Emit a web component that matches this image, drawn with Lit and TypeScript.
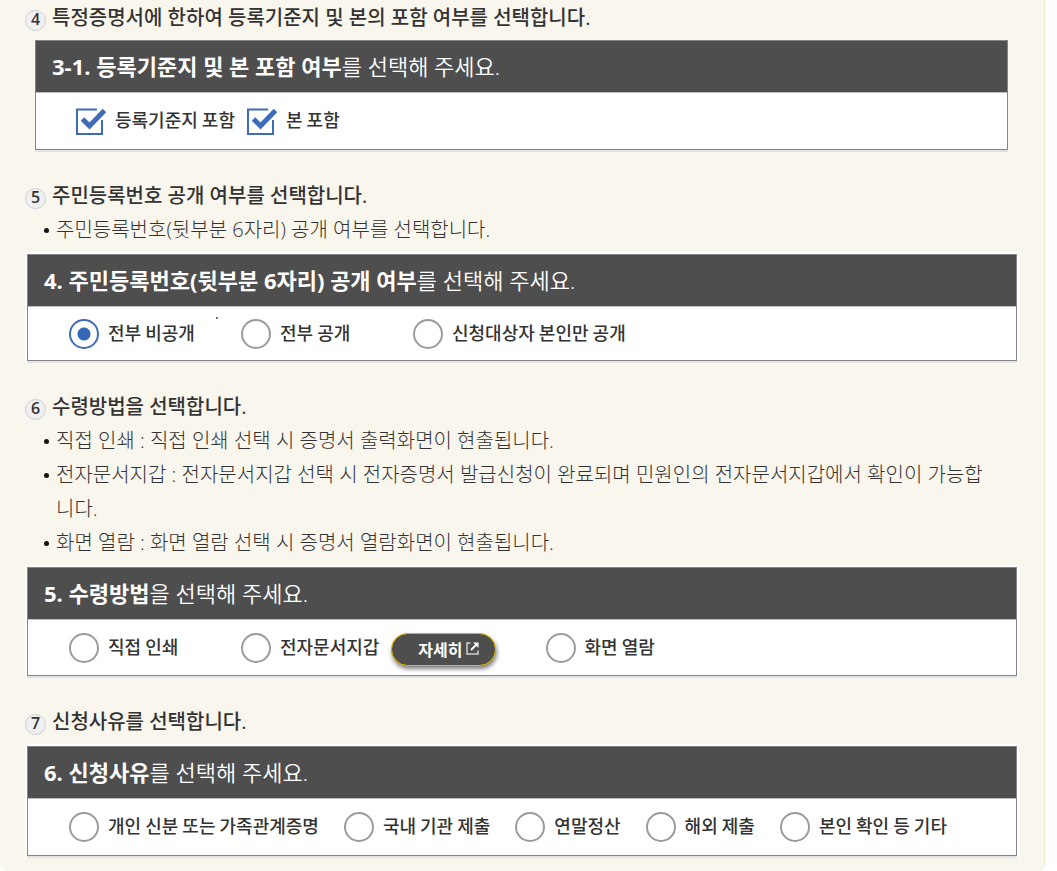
import { LitElement, html, css, svg, nothing } from "lit";
import { customElement, property } from "lit/decorators.js";

interface Choice {
  label: string;
  checked?: boolean;
  more?: boolean;
}

interface Step {
  no: number;
  title: string;
  notes: string[];
  panelStrong: string;
  panelRest: string;
  kind: "checkbox" | "radio";
  variant: string;
  speck?: boolean;
  choices: Choice[];
}

const STEPS: Step[] = [
  {
    no: 4,
    title: "특정증명서에 한하여 등록기준지 및 본의 포함 여부를 선택합니다.",
    notes: [],
    panelStrong: "3-1. 등록기준지 및 본 포함 여부",
    panelRest: "를 선택해 주세요.",
    kind: "checkbox",
    variant: "inset",
    choices: [
      { label: "등록기준지 포함", checked: true },
      { label: "본 포함", checked: true },
    ],
  },
  {
    no: 5,
    title: "주민등록번호 공개 여부를 선택합니다.",
    notes: ["주민등록번호(뒷부분 6자리) 공개 여부를 선택합니다."],
    panelStrong: "4. 주민등록번호(뒷부분 6자리) 공개 여부",
    panelRest: "를 선택해 주세요.",
    kind: "radio",
    variant: "short",
    speck: true,
    choices: [
      { label: "전부 비공개", checked: true },
      { label: "전부 공개" },
      { label: "신청대상자 본인만 공개" },
    ],
  },
  {
    no: 6,
    title: "수령방법을 선택합니다.",
    notes: [
      "직접 인쇄 : 직접 인쇄 선택 시 증명서 출력화면이 현출됩니다.",
      "전자문서지갑 : 전자문서지갑 선택 시 전자증명서 발급신청이 완료되며 민원인의 전자문서지갑에서 확인이 가능합니다.",
      "화면 열람 : 화면 열람 선택 시 증명서 열람화면이 현출됩니다.",
    ],
    panelStrong: "5. 수령방법",
    panelRest: "을 선택해 주세요.",
    kind: "radio",
    variant: "medium",
    choices: [
      { label: "직접 인쇄" },
      { label: "전자문서지갑", more: true },
      { label: "화면 열람" },
    ],
  },
  {
    no: 7,
    title: "신청사유를 선택합니다.",
    notes: [],
    panelStrong: "6. 신청사유",
    panelRest: "를 선택해 주세요.",
    kind: "radio",
    variant: "tall",
    choices: [
      { label: "개인 신분 또는 가족관계증명" },
      { label: "국내 기관 제출" },
      { label: "연말정산" },
      { label: "해외 제출" },
      { label: "본인 확인 등 기타" },
    ],
  },
];

const tick = svg`
  <path d="M21 1.5 H1 V26 H26 V12" fill="none" stroke="#3f6cb8" stroke-width="2"/>
  <path d="M6.5 11 L13.5 18 L28.5 2.5" fill="none" stroke="#3f6cb8" stroke-width="5"/>`;

@customElement("choice-panel")
class ChoicePanel extends LitElement {
  @property({ attribute: false }) step!: Step;

  static styles = css`
    :host { display: block; }
    * { box-sizing: border-box; }
    .frame { padding: 2px; background: #fff; }
    .frame.inset { margin: 0 10px; padding: 0 1px 2px 0; background: none; }
    .panel {
      border: 1px solid #858585; background: #fff;
      box-shadow: 0 2px 0 #e2e2e4;
    }
    .head {
      padding: 0 16px; background: #4e4e4e; color: #fff;
      font-size: 22px; line-height: 51px; font-weight: 350;
    }
    .head b { font-weight: 700; }
    .body {
      position: relative; display: flex; flex-wrap: wrap; align-items: center;
      column-gap: 25px; padding: 0 41px; min-height: 57px;
      border-top: 1px solid #bdbdbd;
      font-family: "Noto Sans CJK KR", sans-serif;
    }
    .short .body { min-height: 54px; }
    .medium .body { min-height: 56px; }
    .inset .body { padding: 0 40px; column-gap: 12px; }
    .choice { display: flex; align-items: center; }
    .short .choice, .medium .choice { min-width: 147px; }
    label {
      display: flex; align-items: center; gap: 9px;
      color: #333; font-size: 18px; line-height: 28px; font-weight: 500;
    }
    .text { padding-bottom: 4px; }
    input { appearance: none; margin: 0; display: block; }
    input[type="radio"] {
      width: 30px; height: 30px; border: 2px solid #9b9b9b; border-radius: 50%;
      background: #fff;
    }
    input[type="radio"]:checked {
      border-color: #3f6cb8;
      background: radial-gradient(circle, #3568b5 6px, #fff 7px);
    }
    .tickbox { display: grid; width: 30px; height: 27px; }
    .tickbox > * { grid-area: 1 / 1; width: 30px; height: 27px; }
    .tickbox svg { pointer-events: none; }
    .more {
      display: flex; align-items: center; gap: 3px;
      height: 33px; margin: 4px 25px 0 12px; padding: 0 16px 2px 26px;
      border: 1px solid #e0b400; border-radius: 17px; background: #4e4e4e;
      box-shadow: 1px 3px 4px rgba(0, 0, 0, 0.5);
      color: #fff; font: inherit; font-size: 16px; line-height: 28px; font-weight: 700;
    }
    .more svg { width: 13px; height: 13px; }
    .speck {
      position: absolute; left: 188px; top: 10px; width: 2px; height: 2px;
      background: #777;
    }
  `;

  render() {
    const s = this.step;
    return html`
      <div class="frame ${s.variant}">
        <div class="panel" role="group" aria-labelledby="head">
          <div class="head" id="head"><b>${s.panelStrong}</b>${s.panelRest}</div>
          <div class="body">
            ${s.choices.map((c, i) => this.choice(c, i))}
            ${s.speck ? html`<span class="speck"></span>` : nothing}
          </div>
        </div>
      </div>`;
  }

  private choice(c: Choice, i: number) {
    const id = `c${i}`;
    return html`
      <div class="choice">
        <label for=${id}>
          ${this.step.kind === "checkbox"
            ? html`<span class="tickbox">
                <input type="checkbox" id=${id} ?checked=${c.checked} />
                <svg viewBox="0 0 30 27" aria-hidden="true">${tick}</svg>
              </span>`
            : html`<input type="radio" id=${id} name="choice" ?checked=${c.checked} />`}
          <span class="text">${c.label}</span>
        </label>
        ${c.more
          ? html`<button class="more" type="button">자세히<svg viewBox="0 0 13 13" aria-hidden="true">
              <path d="M4.5 1 H1 V12 H12 V8.5" fill="none" stroke="#d2d2d2" stroke-width="1.5"/>
              <path d="M5 8 L11 2" fill="none" stroke="#fff" stroke-width="2"/>
              <path d="M7 0.5 H12.5 V6 Z" fill="#fff"/>
            </svg></button>`
          : nothing}
      </div>`;
  }
}

@customElement("app-root")
class AppRoot extends LitElement {
  static styles = css`
    :host {
      display: block; background: #fff; color: #333;
      font-family: "Open Sans", "Noto Sans CJK KR", sans-serif;
    }
    * { box-sizing: border-box; }
    .guide {
      display: flex; flex-direction: column; gap: 27px;
      margin-right: 12px; padding: 1px 25px 13px;
      background: #f9f6ee;
      border-right: 1px solid #f2e8cb;
      border-radius: 0 0 8px 8px;
    }
    .title {
      display: flex; align-items: center; gap: 6px; margin: 0;
      font-size: 20px; line-height: 34px; font-weight: 500;
    }
    .no {
      width: 21px; height: 21px; margin-top: 5px;
      border: 1px solid #cfcfd3; border-radius: 50%; background: #f0f0f2;
      font-size: 16px; line-height: 17px; font-weight: 600; text-align: center;
    }
    .notes { margin: 0; padding: 0 24px 0 31px; list-style: none; }
    .notes li {
      position: relative; font-size: 20px; line-height: 34px; font-weight: 300;
      word-break: break-all;
    }
    .notes li::before {
      content: ""; position: absolute; left: -12px; top: 15px;
      width: 5px; height: 5px; border-radius: 50%; background: #111;
    }
    choice-panel { margin-top: 5px; }
  `;

  render() {
    return html`
      <main class="guide">
        ${STEPS.map(
          (s) => html`
            <section>
              <h2 class="title"><span class="no">${s.no}</span><span>${s.title}</span></h2>
              ${s.notes.length
                ? html`<ul class="notes">${s.notes.map((n) => html`<li>${n}</li>`)}</ul>`
                : nothing}
              <choice-panel .step=${s}></choice-panel>
            </section>`
        )}
      </main>`;
  }
}
